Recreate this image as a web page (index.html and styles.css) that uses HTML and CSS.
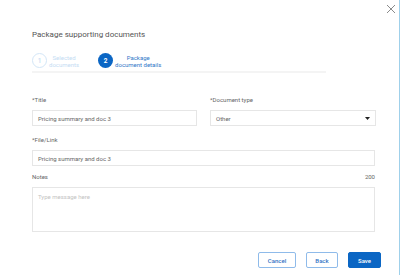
FILE: index.html
```html
<!DOCTYPE html>
<html lang="en">
<head>
<meta charset="utf-8">
<title>Package supporting documents</title>
<link rel="stylesheet" href="styles.css">
</head>
<body>
<div class="modal">
  <button class="close" aria-label="Close">
    <svg width="10" height="10" viewBox="0 0 10 10"><path d="M1 1 L9 9 M9 1 L1 9" stroke="#8a8a8a" stroke-width="1" fill="none"/></svg>
  </button>
  <div class="content">
    <h1 class="title">Package supporting documents</h1>
    <div class="stepper">
      <div class="step done"><span class="num">1</span><span class="lbl">Selected<br>documents</span></div>
      <div class="step active"><span class="num">2</span><span class="lbl">Package<br>document details</span></div>
    </div>
    <div class="form">
      <div class="row">
        <div class="field">
          <div class="label">*Title</div>
          <div class="input">Pricing summary and doc 3</div>
        </div>
        <div class="field">
          <div class="label">*Document type</div>
          <div class="input select"><span>Other</span><svg width="5" height="3" viewBox="0 0 5 3"><path d="M0 0 H5 L2.5 3 Z" fill="#222"/></svg></div>
        </div>
      </div>
      <div class="field file">
        <div class="label">*File/Link</div>
        <div class="input">Pricing summary and doc 3</div>
      </div>
      <div class="field">
        <div class="label label-row"><span>Notes</span><span>200</span></div>
        <div class="textarea">Type message here</div>
      </div>
    </div>
    <div class="actions">
      <button class="btn outline cancel">Cancel</button>
      <button class="btn outline back">Back</button>
      <button class="btn primary save">Save</button>
    </div>
  </div>
</div>
</body>
</html>
```
FILE: styles.css
```css
* { box-sizing: border-box; }
html, body { margin: 0; padding: 0; background: #fff; }
body { font-family: Roboto, "Liberation Sans", sans-serif; color: #555; }

.modal {
  position: relative;
  width: 400px;
  height: 275px;
  border-right: 1px solid #9fd0ea;
  background: #fff;
}

.close {
  position: absolute;
  top: 4px;
  right: 3px;
  width: 10px;
  height: 10px;
  padding: 0;
  border: 0;
  background: none;
  display: flex;
}

.content { padding: 29px 18px 0 32px; }

.title {
  margin: 0;
  font-size: 8px;
  line-height: 11px;
  font-weight: 400;
  color: #555;
}

.stepper {
  margin-top: 13px;
  width: 294px;
  display: flex;
  align-items: center;
  gap: 19px;
  padding-bottom: 3px;
  border-bottom: 2px solid #f4f4f4;
}
.step { display: flex; align-items: center; gap: 2px; }
.num {
  width: 15px;
  height: 15px;
  border-radius: 50%;
  display: flex;
  align-items: center;
  justify-content: center;
  font-size: 6.5px;
  font-weight: 500;
}
.lbl {
  font-size: 6px;
  line-height: 7px;
  text-align: center;
}
.done .num { border: 1px solid #d3e6f7; color: #c4dcf3; }
.done .lbl { color: #c4dcf3; }
.active .num { background: #0b66c4; color: #fff; font-weight: 700; }
.active .lbl { color: #2f78c8; }

.form { margin-top: 23px; margin-right: 6px; }
.row { display: grid; grid-template-columns: 165px 166px; column-gap: 13px; margin-bottom: 10px; }
.field { display: flex; flex-direction: column; }
.file { margin-bottom: 7px; }
.label {
  font-size: 6px;
  line-height: 8px;
  color: #666;
  margin-bottom: 6px;
}
.label-row { display: flex; justify-content: space-between; }
.input {
  height: 16px;
  border: 1px solid #e6e6e6;
  padding: 0 5px;
  display: flex;
  align-items: center;
  font-size: 6px;
  color: #666;
}
.select { justify-content: space-between; padding-right: 5px; }
.textarea {
  height: 45px;
  border: 1px solid #e6e6e6;
  padding: 5px 5px;
  font-size: 6px;
  line-height: 8px;
  color: #c3c3c3;
}

.actions {
  margin-top: 20px;
  display: flex;
  justify-content: flex-end;
  gap: 10px;
}
.btn {
  height: 16px;
  border-radius: 2px;
  font-family: inherit;
  font-size: 6px;
  font-weight: 500;
  padding: 0;
  display: flex;
  align-items: center;
  justify-content: center;
}
.outline { background: #fff; border: 1px solid #8fbbea; color: #2f72c4; }
.primary { background: #0b66c4; border: 1px solid #0b66c4; color: #fff; }
.cancel { width: 38px; }
.back { width: 32px; }
.save { width: 33px; }
```
